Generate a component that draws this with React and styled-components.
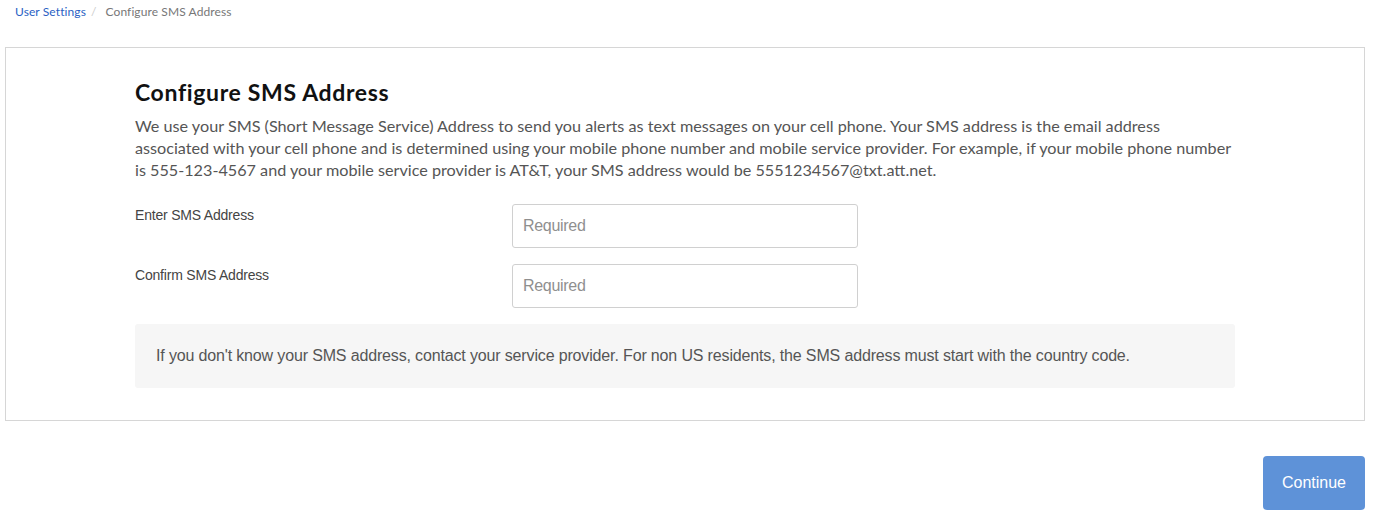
import React from "react";
import styled, { createGlobalStyle } from "styled-components";

const Global = createGlobalStyle`
  html, body { margin: 0; padding: 0; background: #fff; }
  body { font-family: Lato, "Liberation Sans", sans-serif; color: #333; }
  * { box-sizing: border-box; }
`;

const Page = styled.div`
  padding: 0 10px 0 5px;
`;

const Breadcrumb = styled.nav`
  display: flex;
  align-items: center;
  height: 23px;
  padding-left: 10px;
  font-size: 12px;
  letter-spacing: 0.1px;
  color: #777;
`;

const Crumb = styled.a`
  color: #2a5fc4;
  text-decoration: none;
`;

const Sep = styled.span`
  color: #ccc;
  margin: 0 9px 0 5px;
`;

const Card = styled.section`
  margin-top: 24px;
  border: 1px solid #d6d6d6;
  padding: 30px 0 32px 129px;
`;

const Inner = styled.div`
  width: 1100px;
`;

const Title = styled.h1`
  margin: 0 0 9px;
  font-size: 23px;
  font-weight: 700;
  letter-spacing: 0.65px;
  color: #111;
  line-height: 28px;
`;

const Desc = styled.p`
  margin: 0 0 23px;
  font-size: 16.2px;
  line-height: 22px;
  color: #555;
`;

const Row = styled.div`
  display: grid;
  grid-template-columns: 377px 346px;
  margin-bottom: ${(p) => p.$gap}px;
`;

const Label = styled.label`
  font-size: 14px;
  color: #444;
  padding-top: 3px;
  font-family: "Liberation Sans", Arial, sans-serif;
  letter-spacing: -0.2px;
`;

const Input = styled.input`
  height: 44px;
  width: 346px;
  border: 1px solid #d0d0d0;
  border-radius: 3px;
  padding: 0 10px;
  font-size: 16px;
  font-family: "Liberation Sans", Arial, sans-serif;
  letter-spacing: -0.3px;
  &::placeholder { color: #8f8f8f; }
`;

const Info = styled.div`
  background: #f6f6f6;
  border-radius: 3px;
  height: 64px;
  display: flex;
  align-items: center;
  padding: 0 21px;
  font-size: 16px;
  color: #555;
  font-family: "Liberation Sans", Arial, sans-serif;
  letter-spacing: -0.15px;
`;

const Footer = styled.div`
  display: flex;
  justify-content: flex-end;
  margin-top: 35px;
`;

const Button = styled.button`
  width: 102px;
  height: 54px;
  background: #5e92d8;
  color: #fff;
  border: none;
  border-radius: 4px;
  font-size: 16px;
  font-family: "Liberation Sans", Arial, sans-serif;
`;

export default function App() {
  return (
    <Page>
      <Global />
      <Breadcrumb>
        <Crumb href="#">User Settings</Crumb>
        <Sep>/</Sep>
        <span>Configure SMS Address</span>
      </Breadcrumb>
      <Card>
        <Inner>
          <Title>Configure SMS Address</Title>
          <Desc>
            We use your SMS (Short Message Service) Address to send you alerts as text messages on your cell phone. Your SMS address is the email address associated with your cell phone and is determined using your mobile phone number and mobile service provider. For example, if your mobile phone number is 555-123-4567 and your mobile service provider is AT&amp;T, your SMS address would be 5551234567@txt.att.net.
          </Desc>
          <Row $gap={16}>
            <Label>Enter SMS Address</Label>
            <Input placeholder="Required" />
          </Row>
          <Row $gap={16}>
            <Label>Confirm SMS Address</Label>
            <Input placeholder="Required" />
          </Row>
          <Info>
            If you don't know your SMS address, contact your service provider. For non US residents, the SMS address must start with the country code.
          </Info>
        </Inner>
      </Card>
      <Footer>
        <Button>Continue</Button>
      </Footer>
    </Page>
  );
}
